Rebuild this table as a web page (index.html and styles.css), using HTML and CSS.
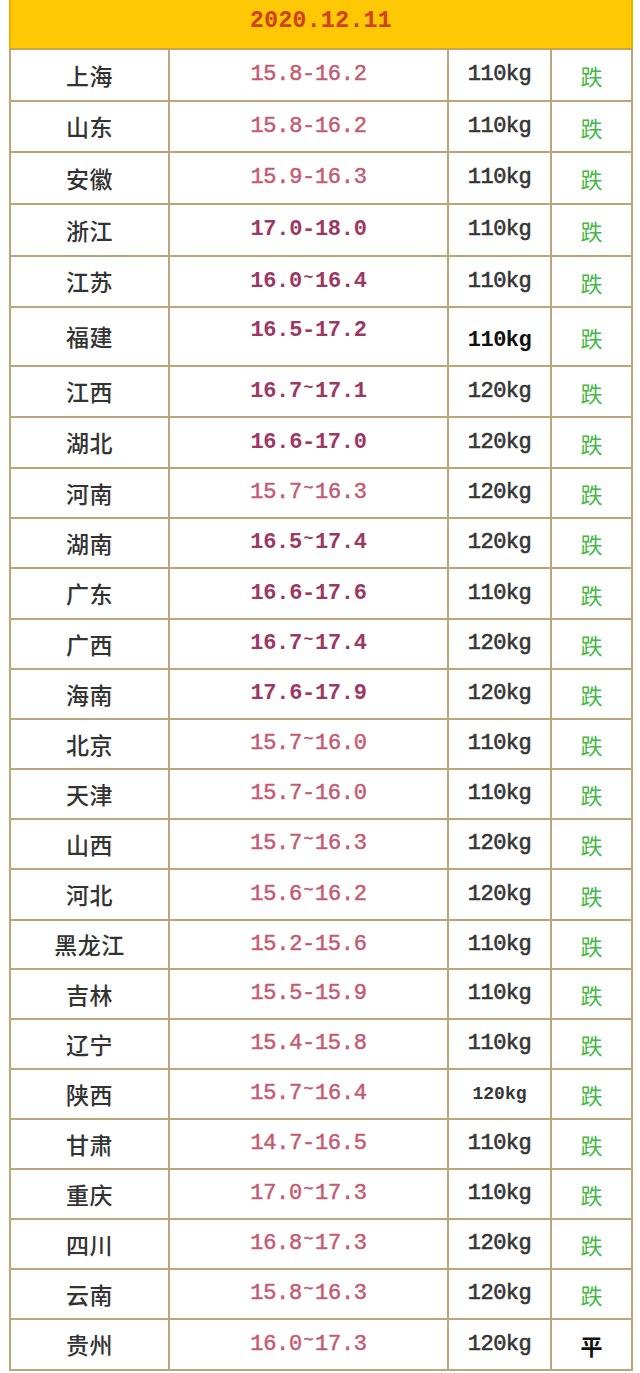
FILE: index.html
```html
<!DOCTYPE html>
<html lang="zh-CN">
<head>
<meta charset="utf-8">
<title>2020.12.11</title>
<link rel="stylesheet" href="styles.css">
</head>
<body>
<div class="page">
<table class="price">
<colgroup><col class="c1"><col class="c2"><col class="c3"><col class="c4"></colgroup>
<thead>
<tr class="head"><th colspan="4"><span class="date">2020.12.11</span></th></tr>
</thead>
<tbody>
<tr class="h52"><td class="name">上海</td><td class="p">15.8-16.2</td><td class="w">110kg</td><td class="t">跌</td></tr>
<tr class="h51"><td class="name">山东</td><td class="p">15.8-16.2</td><td class="w">110kg</td><td class="t">跌</td></tr>
<tr class="h52"><td class="name">安徽</td><td class="p">15.9-16.3</td><td class="w">110kg</td><td class="t">跌</td></tr>
<tr class="h52"><td class="name">浙江</td><td class="p s">17.0-18.0</td><td class="w">110kg</td><td class="t">跌</td></tr>
<tr class="h51"><td class="name">江苏</td><td class="p s">16.0<span class="tl">~</span>16.4</td><td class="w">110kg</td><td class="t">跌</td></tr>
<tr class="h59"><td class="name">福建</td><td class="p s up">16.5-17.2</td><td class="w b">110kg</td><td class="t">跌</td></tr>
<tr class="h51"><td class="name">江西</td><td class="p s">16.7<span class="tl">~</span>17.1</td><td class="w">120kg</td><td class="t">跌</td></tr>
<tr class="h51"><td class="name">湖北</td><td class="p s">16.6-17.0</td><td class="w">120kg</td><td class="t">跌</td></tr>
<tr><td class="name">河南</td><td class="p">15.7<span class="tl">~</span>16.3</td><td class="w">120kg</td><td class="t">跌</td></tr>
<tr><td class="name">湖南</td><td class="p s">16.5<span class="tl">~</span>17.4</td><td class="w">120kg</td><td class="t">跌</td></tr>
<tr class="h51"><td class="name">广东</td><td class="p s">16.6-17.6</td><td class="w">110kg</td><td class="t">跌</td></tr>
<tr><td class="name">广西</td><td class="p s">16.7<span class="tl">~</span>17.4</td><td class="w">120kg</td><td class="t">跌</td></tr>
<tr><td class="name">海南</td><td class="p s">17.6-17.9</td><td class="w">120kg</td><td class="t">跌</td></tr>
<tr><td class="name">北京</td><td class="p">15.7<span class="tl">~</span>16.0</td><td class="w">110kg</td><td class="t">跌</td></tr>
<tr><td class="name">天津</td><td class="p">15.7-16.0</td><td class="w">110kg</td><td class="t">跌</td></tr>
<tr><td class="name">山西</td><td class="p">15.7<span class="tl">~</span>16.3</td><td class="w">120kg</td><td class="t">跌</td></tr>
<tr class="h51"><td class="name">河北</td><td class="p">15.6<span class="tl">~</span>16.2</td><td class="w">120kg</td><td class="t">跌</td></tr>
<tr class="h49"><td class="name">黑龙江</td><td class="p">15.2-15.6</td><td class="w">110kg</td><td class="t">跌</td></tr>
<tr><td class="name">吉林</td><td class="p">15.5-15.9</td><td class="w">110kg</td><td class="t">跌</td></tr>
<tr><td class="name">辽宁</td><td class="p">15.4-15.8</td><td class="w">110kg</td><td class="t">跌</td></tr>
<tr><td class="name">陕西</td><td class="p">15.7<span class="tl">~</span>16.4</td><td class="w sm">120kg</td><td class="t">跌</td></tr>
<tr><td class="name">甘肃</td><td class="p">14.7-16.5</td><td class="w">110kg</td><td class="t">跌</td></tr>
<tr><td class="name">重庆</td><td class="p">17.0<span class="tl">~</span>17.3</td><td class="w">110kg</td><td class="t">跌</td></tr>
<tr><td class="name">四川</td><td class="p">16.8<span class="tl">~</span>17.3</td><td class="w">120kg</td><td class="t">跌</td></tr>
<tr><td class="name">云南</td><td class="p">15.8<span class="tl">~</span>16.3</td><td class="w">120kg</td><td class="t">跌</td></tr>
<tr class="h51"><td class="name">贵州</td><td class="p">16.0<span class="tl">~</span>17.3</td><td class="w">120kg</td><td class="t flat">平</td></tr>
</tbody>
</table>
</div>
</body>
</html>
```

FILE: styles.css
```css
html, body {
  margin: 0;
  padding: 0;
  background: #ffffff;
}

.page {
  padding: 0 0 0 9px;
  width: 622px;
}

.price {
  border-collapse: collapse;
  table-layout: fixed;
  width: 622px;
}

.c1 { width: 159px; }
.c2 { width: 279px; }
.c3 { width: 103px; }
.c4 { width: 81px; }

.price td,
.price th {
  border: 2px solid #bba67a;
  padding: 0;
  text-align: center;
  vertical-align: middle;
  line-height: 1;
}

.head th {
  height: 48px;
  background: #ffc805;
  border-top: none;
  border-left-color: #e8b400;
  border-right-color: #e8b400;
  border-bottom-color: #c9a455;
}

.date {
  font-family: "Liberation Mono", monospace;
  font-size: 23px;
  letter-spacing: 0.4px;
  color: #cf4320;
  -webkit-text-stroke: 0.2px #cf4320;
  position: relative;
  top: -3px;
}

.price tbody tr { height: 50px; }
.price tbody tr.h49 { height: 49px; }
.price tbody tr.h51 { height: 51px; }
.price tbody tr.h52 { height: 52px; }
.price tbody tr.h59 { height: 59px; }

.name {
  font-family: "Noto Sans CJK SC", sans-serif;
  font-weight: 500;
  font-size: 23px;
  color: #333333;
  letter-spacing: 0.5px;
  padding-bottom: 7px;
}

.p {
  font-family: "Liberation Mono", monospace;
  font-size: 22px;
  letter-spacing: -0.3px;
  color: #c55a73;
  -webkit-text-stroke: 0.5px #c55a73;
  padding-top: 4px;
}

.p.s {
  color: #9c3862;
  -webkit-text-stroke: 0;
  font-weight: bold;
}

.p.up {
  padding-top: 0;
  padding-bottom: 12px;
}

.tl {
  display: inline-block;
  vertical-align: 0.32em;
  font-size: 0.75em;
  letter-spacing: 0;
  width: 0.8em;
}

.w {
  font-family: "Liberation Mono", monospace;
  font-size: 22px;
  letter-spacing: -0.5px;
  color: #353535;
  -webkit-text-stroke: 0.6px #353535;
  padding-top: 4px;
}

.w.b {
  color: #111111;
  -webkit-text-stroke: 0;
  font-weight: bold;
  padding-top: 8px;
}

.w.sm {
  font-size: 18px;
  letter-spacing: 0;
  font-weight: bold;
  -webkit-text-stroke: 0;
}

.t {
  font-family: "Noto Sans CJK SC", sans-serif;
  font-size: 22px;
  color: #45b845;
  padding-bottom: 7px;
}

.t.flat {
  color: #111111;
  font-weight: bold;
}
```
